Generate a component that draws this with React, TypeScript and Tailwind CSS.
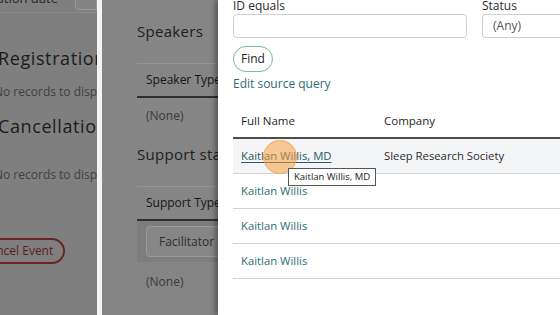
import React from 'react';

const rows = ['Kaitlan Willis, MD', 'Kaitlan Willis', 'Kaitlan Willis', 'Kaitlan Willis'];

export default function App() {
  return (
    <div
      className="relative w-[560px] h-[315px] overflow-hidden bg-[#7f7f7f] flex"
      style={{ fontFamily: '"Open Sans", "Liberation Sans", sans-serif' }}
    >
      {/* Background page (dimmed) */}
      <div className="w-[97px] h-full overflow-hidden flex flex-col shrink-0">
        <div className="h-[13px] border-b border-[#8a8a8a] flex items-end relative">
          <span className="text-[13px] leading-[16px] text-[#2a2a2a] -ml-[40px] mb-[6px] whitespace-nowrap">Publication date</span>
          <div className="ml-auto w-[22px] h-[14px] -mt-[4px] mb-[3px] border border-[#999] rounded-l-[4px] bg-[#838383] self-start" />
        </div>
        <div className="mt-[33px] text-[18px] leading-[24px] tracking-[0.6px] text-[#1c1c1c] -ml-[2px] whitespace-nowrap">Registration</div>
        <div className="mt-[14px] text-[12px] leading-[16px] text-[#3f3f3f] -ml-[6px] whitespace-nowrap">No records to display</div>
        <div className="mt-[14px] text-[18px] leading-[24px] tracking-[0.6px] text-[#1c1c1c] -ml-[2px] whitespace-nowrap">Cancellation</div>
        <div className="mt-[29px] text-[12px] leading-[16px] text-[#3f3f3f] -ml-[6px] whitespace-nowrap">No records to display</div>
        <div className="mt-[55px] -ml-[30px] self-start h-[26px] px-[10px] rounded-full border-2 border-[#6a2424] flex items-center text-[12px] text-[#5e1e1e] whitespace-nowrap">
          Cancel Event
        </div>
      </div>

      {/* Middle drawer (dimmed) */}
      <div className="w-[121px] h-full shrink-0 border-l-[5px] border-[#f4f4f4] bg-[#858585] overflow-hidden pl-[35px] flex flex-col">
        <div className="mt-[21px] text-[15px] leading-[20px] tracking-[0.3px] text-[#1e1e1e] whitespace-nowrap">Speakers</div>
        <div className="mt-[22px] border-b border-[#939393]" />
        <div className="h-[34px] border-b-2 border-[#2e2e2e] flex items-center pl-[9px] text-[12px] text-[#151515] whitespace-nowrap">Speaker Type</div>
        <div className="h-[36px] flex items-center pl-[9px] text-[12px] text-[#3a3a3a] whitespace-nowrap">(None)</div>
        <div className="mt-[10px] text-[15px] leading-[20px] tracking-[0.3px] text-[#1e1e1e] whitespace-nowrap">Support staff</div>
        <div className="mt-[22px] border-b border-[#939393]" />
        <div className="h-[34px] border-b-2 border-[#2e2e2e] flex items-center pl-[9px] text-[12px] text-[#151515] whitespace-nowrap">Support Type</div>
        <div className="h-[41px] bg-[#7d7d7d] flex items-center pl-[9px]">
          <div className="h-[31px] w-[90px] shrink-0 rounded-[4px] border border-[#9a9a9a] bg-[#868686] flex items-center pl-[12px] text-[12px] text-[#2e2e2e]">Facilitator</div>
        </div>
        <div className="h-[40px] flex items-center pl-[9px] text-[12px] text-[#3a3a3a] whitespace-nowrap">(None)</div>
      </div>

      {/* Front drawer */}
      <div className="relative flex-1 h-full bg-white shadow-[-3px_0_5px_rgba(0,0,0,0.35)] pl-[15px] flex flex-col">
        <div className="flex gap-[15px] -mt-[2px]">
          <div className="flex flex-col w-[234px] shrink-0">
            <span className="text-[12px] leading-[16px] text-[#2b2b2b]">ID equals</span>
            <div className="h-[24px] border border-[#cfcfcf] rounded-[4px]" />
          </div>
          <div className="flex flex-col flex-1">
            <span className="text-[12px] leading-[16px] text-[#2b2b2b]">Status</span>
            <div className="h-[24px] border border-[#cfcfcf] border-r-0 rounded-l-[4px] flex items-center pl-[10px] text-[12px] text-[#555]">(Any)</div>
          </div>
        </div>
        <button className="mt-[8px] self-start w-[40px] h-[26px] rounded-full border-[1.5px] border-[#79b9a6] text-[12px] text-[#1f1f1f] flex items-center justify-center">
          Find
        </button>
        <div className="mt-[4px] text-[12px] leading-[16px] text-[#2d6d71]">Edit source query</div>

        <div className="mt-[13px] flex flex-col">
          <div className="h-[34px] flex items-center border-b-2 border-[#4d4d4d] text-[11.5px] text-[#1f1f1f]">
            <span className="w-[143px] pl-[8px]">Full Name</span>
            <span className="pl-[8px]">Company</span>
          </div>
          {rows.map((r, i) => (
            <div
              key={i}
              className={`h-[35px] flex items-center border-b border-[#d3d3d3] text-[11.3px] ${i === 0 ? 'bg-[#f4f5f7]' : ''}`}
            >
              <span className={`w-[143px] pl-[8px] whitespace-nowrap ${i === 0 ? 'text-[#285a5e] underline underline-offset-2' : 'text-[#2d6d71]'}`}>{r}</span>
              {i === 0 && <span className="pl-[8px] text-[#2b2b2b] whitespace-nowrap">Sleep Research Society</span>}
            </div>
          ))}
        </div>

        {/* cursor highlight */}
        <div className="absolute left-[45px] top-[140px] w-[34px] h-[34px] rounded-full bg-[#f6a040]/55 border border-[#f2a653]/70" />

        {/* tooltip */}
        <div className="absolute left-[70px] top-[168px] h-[18px] px-[5px] bg-white border border-[#555] flex items-center text-[9.5px] text-[#222] whitespace-nowrap">
          Kaitlan Willis, MD
        </div>
      </div>
    </div>
  );
}
